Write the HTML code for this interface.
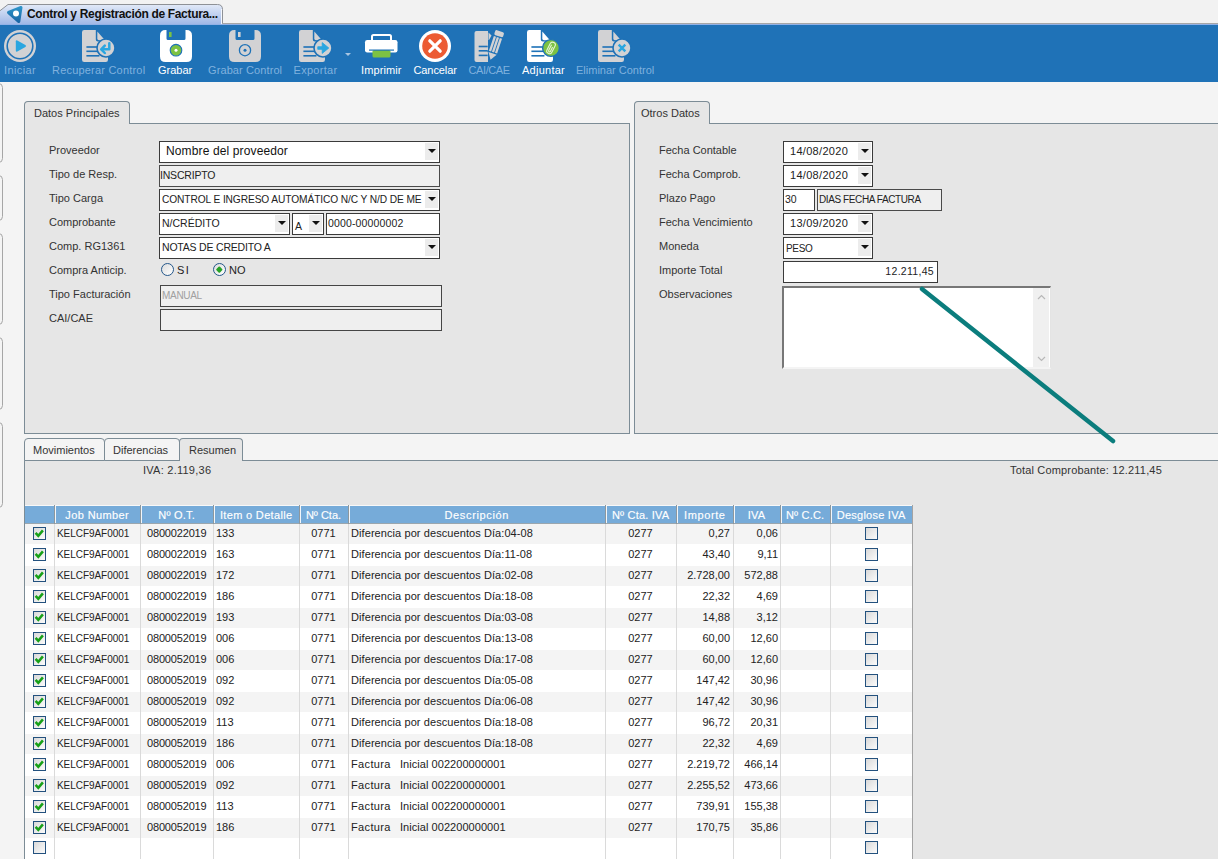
<!DOCTYPE html><html><head><meta charset="utf-8"><style>
*{margin:0;padding:0;box-sizing:border-box}
html,body{width:1218px;height:859px;overflow:hidden;background:#f4f4f4;font-family:"Liberation Sans",sans-serif;font-size:11px;color:#333}
.a{position:absolute}
.tl{position:absolute;top:64px;font-size:11px;line-height:13px;white-space:nowrap;color:#7fb1de}
.tl.en{color:#fff}
svg{position:absolute;overflow:visible}
.lbl{position:absolute;white-space:nowrap;color:#333;font-size:11px;line-height:13px}
.inp{position:absolute;height:22px;border:1px solid #3a3a3a;background:#fff;white-space:nowrap;overflow:hidden}
.inp.dis{background:#efefef;border-color:#4a4a4a}
.inp span{position:absolute;left:3px;top:3px;color:#222;font-size:10.5px;line-height:13px}
.dd{position:absolute;right:1px;top:1px;width:13px;height:17px;background:#ececec}
.dd:after{content:"";position:absolute;left:2.5px;top:6px;border-left:4px solid transparent;border-right:4px solid transparent;border-top:4.5px solid #111}
.vt{position:absolute;left:-6px;width:9px;border:1px solid #a6a6a6;border-radius:5px;background:#f4f4f4}
.hdr{position:absolute;top:506px;height:18px;-webkit-text-stroke:0.15px #fff;background:#76abd9;color:#fff;text-align:center;white-space:nowrap;overflow:hidden;font-size:11px;line-height:13px;border-bottom:1px solid #9aa6ae}
.hdr span{position:absolute;left:0;right:0;top:3px}
.hsep{position:absolute;top:506px;width:2px;height:18px;background:#a9c3dc;border-left:1px solid #8aa}
.cell{position:absolute;white-space:nowrap;color:#222;font-size:11px;line-height:13px}
.rowbg{position:absolute;left:25px;width:887px;height:21px}
.vline{position:absolute;width:1px;background:#dadada;top:524px;height:335px}
.cb{position:absolute;width:13px;height:13px;border:1px solid #23517e;background:linear-gradient(135deg,#d9d9d9,#fbfbfb)}
.rad{position:absolute;width:13px;height:13px;border:1.4px solid #24578a;border-radius:50%;background:linear-gradient(135deg,#dcdcdc,#fff)}
</style></head><body>
<div class="a" style="left:0;top:0;width:1218px;height:25px;background:#f2f2f2"></div>
<svg style="left:0;top:0" width="230" height="26" viewBox="0 0 230 26"><defs><linearGradient id="ttg" x1="0" y1="0" x2="0" y2="1"><stop offset="0" stop-color="#e2eaf8"/><stop offset="1" stop-color="#9ab3e5"/></linearGradient></defs><path d="M-1 26 V11.5 L8 4.5 H217.5 Q222.5 4.5 222.5 9.5 V26 Z" fill="url(#ttg)" stroke="#8e9196" stroke-width="1"/></svg>
<svg style="left:5px;top:6px" width="18" height="18" viewBox="0 0 18 18"><defs><linearGradient id="tg" x1="0" y1="0" x2="0" y2="1"><stop offset="0" stop-color="#2d93c8"/><stop offset="1" stop-color="#1b67a6"/></linearGradient></defs><path d="M3.5 6.5 L16 1.5 L13.8 15.5 Z" fill="url(#tg)" stroke="url(#tg)" stroke-width="3" stroke-linejoin="round"/><circle cx="11" cy="7.5" r="3" fill="#fff"/></svg>
<div class="a" style="left:222px;top:23px;width:1000px;height:1px;background:#a6a6a6"></div>
<div class="a" style="left:0;top:24px;width:1218px;height:1px;background:#92b1e6"></div>
<div class="a" style="left:221px;top:9px;width:1px;height:15px;background:#f4f8ff"></div>
<div class="a" style="left:27px;top:8px;font-weight:bold;font-size:12px;letter-spacing:-0.33px;line-height:13px;color:#111;white-space:nowrap">Control y Registración de Factura...</div>
<div class="a" style="left:0;top:25px;width:1218px;height:57px;background:#1f72b7"></div>
<svg style="left:4px;top:30px" width="32" height="32" viewBox="0 0 32 32"><circle cx="16" cy="16" r="16" fill="#d2d2d4"/><circle cx="16" cy="16" r="12.8" fill="none" stroke="#1f72b7" stroke-width="1.6"/><path d="M11.8 11.3 Q11.8 9.6 13.3 10.4 L21.4 14.9 Q22.9 15.9 21.4 16.9 L13.3 21.5 Q11.8 22.3 11.8 20.6 Z" fill="#2aa6e0"/></svg>
<div class="tl" style="left:4px;letter-spacing:0.4px">Iniciar</div>
<svg style="left:82px;top:30px" width="34" height="34" viewBox="0 0 34 34"><path d="M2.2 0 H13.8 V9.6 Q13.8 11.6 15.8 11.6 H26 V29.8 Q26 32 23.8 32 H2.2 Q0 32 0 29.8 V2.2 Q0 0 2.2 0 Z" fill="#d2d2d4"/><path d="M15.3 1.6 L23 10.2 H17 Q15.3 10.2 15.3 8.6 Z" fill="#d2d2d4"/><rect x="4.4" y="16.2" width="13" height="1.6" fill="#1f72b7"/><rect x="4.4" y="20.5" width="13" height="1.6" fill="#1f72b7"/><rect x="4.4" y="25" width="13" height="1.6" fill="#1f72b7"/><circle cx="24" cy="18" r="9" fill="#d2d2d4" stroke="#1f72b7" stroke-width="1.6"/><path d="M27.3 13.2 V19.3 H21.5" fill="none" stroke="#2aa6e0" stroke-width="2.5" stroke-linecap="round" stroke-linejoin="round"/><path d="M22.8 15.6 L19.2 19.3 L22.8 23" fill="none" stroke="#2aa6e0" stroke-width="2.5" stroke-linecap="round" stroke-linejoin="round"/></svg>
<div class="tl" style="left:52px;letter-spacing:0.2px">Recuperar Control</div>
<svg style="left:160px;top:30px" width="32" height="32" viewBox="0 0 32 32"><path d="M5.5 0 H6.5 V8.5 Q6.5 10 8 10 H24 Q25.5 10 25.5 8.5 V0 H26.5 Q32 0 32 5.5 V26.5 Q32 32 26.5 32 H5.5 Q0 32 0 26.5 V5.5 Q0 0 5.5 0 Z" fill="#ffffff"/><rect x="9" y="2" width="2.6" height="5" fill="#7cc243"/><circle cx="16" cy="20.2" r="5.8" fill="#7cc243" stroke="#1f72b7" stroke-width="1.1"/><circle cx="16" cy="20.2" r="1.5" fill="#fff"/></svg>
<div class="tl en" style="left:158px">Grabar</div>
<svg style="left:229px;top:30px" width="32" height="32" viewBox="0 0 32 32"><path d="M5.5 0 H6.5 V8.5 Q6.5 10 8 10 H24 Q25.5 10 25.5 8.5 V0 H26.5 Q32 0 32 5.5 V26.5 Q32 32 26.5 32 H5.5 Q0 32 0 26.5 V5.5 Q0 0 5.5 0 Z" fill="#d2d2d4"/><rect x="9" y="2" width="2.6" height="5" fill="#d2d2d4"/><circle cx="16" cy="20.2" r="5.6" fill="#d2d2d4" stroke="#1f72b7" stroke-width="1.3"/><circle cx="16" cy="20.2" r="1.5" fill="#1f72b7"/></svg>
<div class="tl" style="left:208px;letter-spacing:0.1px">Grabar Control</div>
<svg style="left:299px;top:30px" width="34" height="34" viewBox="0 0 34 34"><path d="M2.2 0 H13.8 V9.6 Q13.8 11.6 15.8 11.6 H26 V29.8 Q26 32 23.8 32 H2.2 Q0 32 0 29.8 V2.2 Q0 0 2.2 0 Z" fill="#d2d2d4"/><path d="M15.3 1.6 L23 10.2 H17 Q15.3 10.2 15.3 8.6 Z" fill="#d2d2d4"/><rect x="4.4" y="16.2" width="13" height="1.6" fill="#1f72b7"/><rect x="4.4" y="20.5" width="13" height="1.6" fill="#1f72b7"/><rect x="4.4" y="25" width="13" height="1.6" fill="#1f72b7"/><circle cx="24" cy="18" r="9" fill="#d2d2d4" stroke="#1f72b7" stroke-width="1.6"/><rect x="18.3" y="16.2" width="6" height="3.6" rx="0.8" fill="#2aa6e0"/><path d="M23.2 12.6 L29.8 18 L23.2 23.4 Z" fill="#2aa6e0" stroke="#2aa6e0" stroke-width="0.8" stroke-linejoin="round"/></svg>
<svg style="left:345px;top:52.5px" width="6" height="3" viewBox="0 0 6 3"><path d="M0 0 H6 L3 3 Z" fill="#a9c6e2"/></svg>
<div class="tl" style="left:293.5px;letter-spacing:0.3px">Exportar</div>
<svg style="left:365px;top:34px" width="33" height="24" viewBox="0 0 33 24"><path d="M7 6 V2.5 Q7 1 8.5 1 H24.5 Q26 1 26 2.5 V6" fill="none" stroke="#fff" stroke-width="2"/><rect x="0" y="6" width="32.5" height="12.5" rx="2.2" fill="#fff"/><rect x="7.5" y="16" width="18" height="7.5" rx="1.5" fill="#7cc243"/><rect x="4" y="15.5" width="25" height="1.2" fill="#1f72b7"/></svg>
<div class="tl en" style="left:361px;letter-spacing:0.1px">Imprimir</div>
<svg style="left:419px;top:30px" width="32" height="32" viewBox="0 0 32 32"><circle cx="16" cy="16" r="16" fill="#fff"/><circle cx="16" cy="16" r="12.8" fill="#ec5b33"/><path d="M10.8 10.8 L21.2 21.2 M21.2 10.8 L10.8 21.2" stroke="#fff" stroke-width="3.2" stroke-linecap="round"/></svg>
<div class="tl en" style="left:413.5px;letter-spacing:-0.1px">Cancelar</div>
<svg style="left:474px;top:30px" width="32" height="34" viewBox="0 0 32 34"><path d="M2.5 1 H14 V32 H2.5 Q0.5 32 0.5 30 V3 Q0.5 1 2.5 1 Z" fill="#d2d2d4"/><path d="M14.5 2.5 L17.5 5.5 L15 10 L14.5 10 Z" fill="#d2d2d4"/><rect x="4.7" y="15.7" width="9" height="1.6" fill="#1f72b7"/><rect x="4.7" y="20" width="9" height="1.6" fill="#1f72b7"/><rect x="4.7" y="24.6" width="9" height="1.6" fill="#1f72b7"/><g transform="translate(16.2 30.6) rotate(18.4)"><path d="M0 0 L-5.5 -8 V-25.5 H5.5 V-8 Z" fill="#1f72b7"/><path d="M0 -1 L-4.3 -7.6 H4.3 Z" fill="#d2d2d4"/><rect x="-4.3" y="-24.5" width="2.3" height="15.5" fill="#d2d2d4"/><rect x="-1.15" y="-24.5" width="2.3" height="15.5" fill="#d2d2d4"/><rect x="2" y="-24.5" width="2.3" height="15.5" fill="#d2d2d4"/><rect x="-4.6" y="-31" width="9.2" height="5.2" rx="1.5" fill="#d2d2d4"/></g></svg>
<div class="tl" style="left:468.5px;letter-spacing:-0.4px">CAI/CAE</div>
<svg style="left:527px;top:30px" width="34" height="34" viewBox="0 0 34 34"><path d="M2.2 0 H13.8 V9.6 Q13.8 11.6 15.8 11.6 H26 V29.8 Q26 32 23.8 32 H2.2 Q0 32 0 29.8 V2.2 Q0 0 2.2 0 Z" fill="#ffffff"/><path d="M15.3 1.6 L23 10.2 H17 Q15.3 10.2 15.3 8.6 Z" fill="#ffffff"/><rect x="4.4" y="16.2" width="13" height="1.6" fill="#1f72b7"/><rect x="4.4" y="20.5" width="13" height="1.6" fill="#1f72b7"/><rect x="4.4" y="25" width="13" height="1.6" fill="#1f72b7"/><circle cx="24" cy="18" r="8.4" fill="#7cc243" stroke="#1f72b7" stroke-width="1.4"/><g transform="translate(24 18) rotate(27)" fill="none" stroke="#e6f4d6" stroke-width="1.1"><path d="M-2.7 3.6 V-3.6 Q-2.7 -6.2 0 -6.2 Q2.7 -6.2 2.7 -3.6 V3.4 Q2.7 6 0 6 Q-2.7 6 -2.7 3.6"/><path d="M-1 -3.2 V3 Q-1 4.2 0 4.2 Q1 4.2 1 3 V-1.5"/></g></svg>
<div class="tl en" style="left:522px;letter-spacing:0.25px">Adjuntar</div>
<svg style="left:598px;top:30px" width="34" height="34" viewBox="0 0 34 34"><path d="M2.2 0 H13.8 V9.6 Q13.8 11.6 15.8 11.6 H26 V29.8 Q26 32 23.8 32 H2.2 Q0 32 0 29.8 V2.2 Q0 0 2.2 0 Z" fill="#d2d2d4"/><path d="M15.3 1.6 L23 10.2 H17 Q15.3 10.2 15.3 8.6 Z" fill="#d2d2d4"/><rect x="4.4" y="16.2" width="13" height="1.6" fill="#1f72b7"/><rect x="4.4" y="20.5" width="13" height="1.6" fill="#1f72b7"/><rect x="4.4" y="25" width="13" height="1.6" fill="#1f72b7"/><circle cx="24" cy="18" r="9" fill="#d2d2d4" stroke="#1f72b7" stroke-width="1.6"/><path d="M20.7 14.7 L27.3 21.3 M27.3 14.7 L20.7 21.3" stroke="#2aa6e0" stroke-width="2.4"/></svg>
<div class="tl" style="left:576px">Eliminar Control</div>
<div class="vt" style="top:83px;height:80px"></div>
<div class="vt" style="top:175px;height:46px"></div>
<div class="vt" style="top:233px;height:92px"></div>
<div class="vt" style="top:337px;height:73px"></div>
<div class="vt" style="top:422px;height:86px"></div>
<div class="a" style="left:24px;top:123px;width:606px;height:311px;background:#e6e6e6;border:1px solid #7c8c96"></div>
<div class="a" style="left:24px;top:101px;width:106px;height:23px;background:#e6e6e6;border:1px solid #7c8c96;border-bottom:none;border-radius:4px 4px 0 0"></div>
<div class="lbl" style="left:34px;top:107px">Datos Principales</div>
<div class="a" style="left:634px;top:123px;width:590px;height:311px;background:#e6e6e6;border:1px solid #7c8c96"></div>
<div class="a" style="left:634px;top:101px;width:76px;height:23px;background:#e6e6e6;border:1px solid #7c8c96;border-bottom:none;border-radius:4px 4px 0 0"></div>
<div class="lbl" style="left:641px;top:107px">Otros Datos</div>
<div class="lbl" style="left:49px;top:144px">Proveedor</div>
<div class="lbl" style="left:49px;top:168px">Tipo de Resp.</div>
<div class="lbl" style="left:49px;top:192px">Tipo Carga</div>
<div class="lbl" style="left:49px;top:216px">Comprobante</div>
<div class="lbl" style="left:49px;top:240px">Comp. RG1361</div>
<div class="lbl" style="left:49px;top:264px">Compra Anticip.</div>
<div class="lbl" style="left:49px;top:288px">Tipo Facturación</div>
<div class="lbl" style="left:49px;top:312px">CAI/CAE</div>
<div class="inp" style="left:159px;top:141px;width:281px;"><span style="left:6px;font-size:12px;letter-spacing:0.13px;color:#111">Nombre del proveedor</span><div class="dd"></div></div>
<div class="inp dis" style="left:159px;top:165px;width:281px;"><span style="left:0px;font-size:10.5px;letter-spacing:-0.2px">INSCRIPTO</span></div>
<div class="inp" style="left:159px;top:189px;width:281px;"><span style="left:2px;font-size:10.2px;letter-spacing:-0.1px">CONTROL E INGRESO AUTOMÁTICO N/C Y N/D DE ME</span><div class="dd"></div></div>
<div class="inp" style="left:159px;top:213px;width:131px;"><span style="left:2px;font-size:10.5px;letter-spacing:0px">N/CRÉDITO</span><div class="dd"></div></div>
<div class="inp" style="left:292px;top:213px;width:32px;"><span style="left:2px;top:6px;font-size:10.5px">A</span><div class="dd"></div></div>
<div class="inp" style="left:326px;top:213px;width:114px;"><span style="left:1px;font-size:10.5px;letter-spacing:0.15px">0000-00000002</span></div>
<div class="inp" style="left:159px;top:237px;width:281px;"><span style="left:2px;font-size:10.5px;letter-spacing:-0.2px">NOTAS DE CREDITO A</span><div class="dd"></div></div>
<div class="rad" style="left:161px;top:263px"></div>
<div class="lbl" style="left:177px;top:264px;letter-spacing:1.5px;color:#222">SI</div>
<div class="rad" style="left:213px;top:263px"><div style="position:absolute;left:3.2px;top:3.2px;width:4.6px;height:4.6px;transform:rotate(45deg);border-radius:1px;background:#27a327"></div></div>
<div class="lbl" style="left:229px;top:264px;color:#222">NO</div>
<div class="inp dis" style="left:160px;top:285px;width:282px;border-color:#454545"><span style="left:1px;color:#a0a0a0;font-size:10px;letter-spacing:-0.3px">MANUAL</span></div>
<div class="inp dis" style="left:160px;top:309px;width:282px;border-color:#454545"><span style=""></span></div>
<div class="lbl" style="left:659px;top:144px">Fecha Contable</div>
<div class="lbl" style="left:659px;top:168px">Fecha Comprob.</div>
<div class="lbl" style="left:659px;top:192px">Plazo Pago</div>
<div class="lbl" style="left:659px;top:216px">Fecha Vencimiento</div>
<div class="lbl" style="left:659px;top:240px">Moneda</div>
<div class="lbl" style="left:659px;top:264px">Importe Total</div>
<div class="lbl" style="left:659px;top:288px">Observaciones</div>
<div class="inp" style="left:783px;top:141px;width:90px;"><span style="left:6px;font-size:11px;letter-spacing:0.3px">14/08/2020</span><div class="dd"></div></div>
<div class="inp" style="left:783px;top:165px;width:90px;"><span style="left:6px;font-size:11px;letter-spacing:0.3px">14/08/2020</span><div class="dd"></div></div>
<div class="inp" style="left:783px;top:189px;width:32px;"><span style="left:1px;font-size:10.5px">30</span></div>
<div class="inp dis" style="left:817px;top:189px;width:125px;"><span style="left:1px;font-size:10px;letter-spacing:-0.4px">DIAS FECHA FACTURA</span></div>
<div class="inp" style="left:783px;top:213px;width:90px;"><span style="left:6px;font-size:11px;letter-spacing:0.3px">13/09/2020</span><div class="dd"></div></div>
<div class="inp" style="left:783px;top:237px;width:90px;"><span style="left:2px;top:4px;font-size:10px;letter-spacing:-0.3px">PESO</span><div class="dd"></div></div>
<div class="inp" style="left:783px;top:261px;width:155px;"><span style="left:auto;right:3px;font-size:11px;letter-spacing:0.3px"><span style="position:static">12.211,45</span></span></div>
<div class="a" style="left:782px;top:286px;width:269px;height:83px;background:#fff;border-top:2px solid #777;border-left:2px solid #777;border-right:1px solid #e4e4e4;border-bottom:2px solid #f4f4f4"></div>
<div class="a" style="left:1033px;top:288px;width:16px;height:79px;background:#f0f0f0"></div>
<svg style="left:1037px;top:294px" width="9" height="6" viewBox="0 0 9 6"><path d="M1 5 L4.5 1.5 L8 5" fill="none" stroke="#b8b8b8" stroke-width="1.2"/></svg>
<svg style="left:1037px;top:356px" width="9" height="6" viewBox="0 0 9 6"><path d="M1 1 L4.5 4.5 L8 1" fill="none" stroke="#b8b8b8" stroke-width="1.2"/></svg>
<div class="a" style="left:24px;top:460px;width:1200px;height:405px;background:#e6e6e6;border:1px solid #7c8c96"></div>
<div class="a" style="left:24px;top:438px;width:81px;height:23px;background:#f4f4f4;border:1px solid #7c8c96;border-radius:4px 4px 0 0"></div>
<div class="lbl" style="left:33px;top:444px">Movimientos</div>
<div class="a" style="left:104px;top:438px;width:76px;height:23px;background:#f4f4f4;border:1px solid #7c8c96;border-radius:4px 4px 0 0"></div>
<div class="lbl" style="left:113px;top:444px">Diferencias</div>
<div class="a" style="left:179px;top:438px;width:64px;height:23px;background:#e6e6e6;border:1px solid #7c8c96;border-bottom:none;border-radius:4px 4px 0 0"></div>
<div class="lbl" style="left:189px;top:444px">Resumen</div>
<div class="lbl" style="left:143px;top:464px;letter-spacing:0.25px">IVA: 2.119,36</div>
<div class="lbl" style="left:1010px;top:464px;letter-spacing:0.17px">Total Comprobante: 12.211,45</div>
<div class="rowbg" style="top:524px;height:20px;background:#f4f4f4"></div>
<div class="rowbg" style="top:544px;height:22px;background:#ffffff"></div>
<div class="rowbg" style="top:566px;height:20px;background:#f4f4f4"></div>
<div class="rowbg" style="top:586px;height:22px;background:#ffffff"></div>
<div class="rowbg" style="top:608px;height:20px;background:#f4f4f4"></div>
<div class="rowbg" style="top:628px;height:22px;background:#ffffff"></div>
<div class="rowbg" style="top:650px;height:20px;background:#f4f4f4"></div>
<div class="rowbg" style="top:670px;height:22px;background:#ffffff"></div>
<div class="rowbg" style="top:692px;height:20px;background:#f4f4f4"></div>
<div class="rowbg" style="top:712px;height:22px;background:#ffffff"></div>
<div class="rowbg" style="top:734px;height:20px;background:#f4f4f4"></div>
<div class="rowbg" style="top:754px;height:22px;background:#ffffff"></div>
<div class="rowbg" style="top:776px;height:20px;background:#f4f4f4"></div>
<div class="rowbg" style="top:796px;height:22px;background:#ffffff"></div>
<div class="rowbg" style="top:818px;height:20px;background:#f4f4f4"></div>
<div class="rowbg" style="top:838px;height:22px;background:#ffffff"></div>
<div class="a" style="left:25px;top:505px;width:887px;height:1px;background:#f8f8f8"></div>
<div class="hdr" style="left:25px;width:29px"><span style="letter-spacing:0px;text-indent:0px"></span></div>
<div class="hdr" style="left:54px;width:86px"><span style="letter-spacing:0.4px;text-indent:0.4px">Job Number</span></div>
<div class="hdr" style="left:140px;width:73px"><span style="letter-spacing:0.2px;text-indent:0.2px">Nº O.T.</span></div>
<div class="hdr" style="left:213px;width:86px"><span style="letter-spacing:0.33px;text-indent:0.33px">Item o Detalle</span></div>
<div class="hdr" style="left:299px;width:49px"><span style="letter-spacing:0px;text-indent:0px">Nº Cta.</span></div>
<div class="hdr" style="left:348px;width:257px"><span style="letter-spacing:0.65px;text-indent:0.65px">Descripción</span></div>
<div class="hdr" style="left:605px;width:71px"><span style="letter-spacing:0.2px;text-indent:0.2px">Nº Cta. IVA</span></div>
<div class="hdr" style="left:676px;width:57px"><span style="letter-spacing:0.6px;text-indent:0.6px">Importe</span></div>
<div class="hdr" style="left:733px;width:47px"><span style="letter-spacing:0.2px;text-indent:0.2px">IVA</span></div>
<div class="hdr" style="left:780px;width:50px"><span style="letter-spacing:0.2px;text-indent:0.2px">Nº C.C.</span></div>
<div class="hdr" style="left:830px;width:82px"><span style="letter-spacing:0.25px;text-indent:0.25px">Desglose IVA</span></div>
<div class="vline" style="left:54px"></div>
<div class="a" style="left:54px;top:505px;width:1px;height:19px;background:#8d979d"></div>
<div class="a" style="left:55px;top:506px;width:1px;height:17px;background:#f2f6fa"></div>
<div class="vline" style="left:140px"></div>
<div class="a" style="left:140px;top:505px;width:1px;height:19px;background:#8d979d"></div>
<div class="a" style="left:141px;top:506px;width:1px;height:17px;background:#f2f6fa"></div>
<div class="vline" style="left:213px"></div>
<div class="a" style="left:213px;top:505px;width:1px;height:19px;background:#8d979d"></div>
<div class="a" style="left:214px;top:506px;width:1px;height:17px;background:#f2f6fa"></div>
<div class="vline" style="left:299px"></div>
<div class="a" style="left:299px;top:505px;width:1px;height:19px;background:#8d979d"></div>
<div class="a" style="left:300px;top:506px;width:1px;height:17px;background:#f2f6fa"></div>
<div class="vline" style="left:348px"></div>
<div class="a" style="left:348px;top:505px;width:1px;height:19px;background:#8d979d"></div>
<div class="a" style="left:349px;top:506px;width:1px;height:17px;background:#f2f6fa"></div>
<div class="vline" style="left:605px"></div>
<div class="a" style="left:605px;top:505px;width:1px;height:19px;background:#8d979d"></div>
<div class="a" style="left:606px;top:506px;width:1px;height:17px;background:#f2f6fa"></div>
<div class="vline" style="left:676px"></div>
<div class="a" style="left:676px;top:505px;width:1px;height:19px;background:#8d979d"></div>
<div class="a" style="left:677px;top:506px;width:1px;height:17px;background:#f2f6fa"></div>
<div class="vline" style="left:733px"></div>
<div class="a" style="left:733px;top:505px;width:1px;height:19px;background:#8d979d"></div>
<div class="a" style="left:734px;top:506px;width:1px;height:17px;background:#f2f6fa"></div>
<div class="vline" style="left:780px"></div>
<div class="a" style="left:780px;top:505px;width:1px;height:19px;background:#8d979d"></div>
<div class="a" style="left:781px;top:506px;width:1px;height:17px;background:#f2f6fa"></div>
<div class="vline" style="left:830px"></div>
<div class="a" style="left:830px;top:505px;width:1px;height:19px;background:#8d979d"></div>
<div class="a" style="left:831px;top:506px;width:1px;height:17px;background:#f2f6fa"></div>
<div class="vline" style="left:912px;top:505px;height:354px;background:#a3a3a3"></div>
<div class="cb" style="left:33px;top:527px"><svg style="left:0;top:0" width="11" height="11" viewBox="0 0 11 11"><path d="M1.6 4.9 L4.3 7.9 L8.9 2.4" fill="none" stroke="#17a017" stroke-width="2.5"/></svg></div>
<div class="cell" style="left:57px;top:527px;font-size:10px;letter-spacing:-0.05px">KELCF9AF0001</div>
<div class="cell" style="left:147px;top:527px;font-size:11px;letter-spacing:-0.17px">0800022019</div>
<div class="cell" style="left:216px;top:527px">133</div>
<div class="cell" style="left:299px;width:49px;text-align:center;top:527px">0771</div>
<div class="cell" style="left:351px;top:527px;letter-spacing:0.08px">Diferencia por descuentos Día:04-08</div>
<div class="cell" style="left:605px;width:71px;text-align:center;top:527px">0277</div>
<div class="cell" style="left:676px;width:54px;text-align:right;top:527px">0,27</div>
<div class="cell" style="left:733px;width:45px;text-align:right;top:527px">0,06</div>
<div class="cb" style="left:865px;top:527px"></div>
<div class="cb" style="left:33px;top:548px"><svg style="left:0;top:0" width="11" height="11" viewBox="0 0 11 11"><path d="M1.6 4.9 L4.3 7.9 L8.9 2.4" fill="none" stroke="#17a017" stroke-width="2.5"/></svg></div>
<div class="cell" style="left:57px;top:548px;font-size:10px;letter-spacing:-0.05px">KELCF9AF0001</div>
<div class="cell" style="left:147px;top:548px;font-size:11px;letter-spacing:-0.17px">0800022019</div>
<div class="cell" style="left:216px;top:548px">163</div>
<div class="cell" style="left:299px;width:49px;text-align:center;top:548px">0771</div>
<div class="cell" style="left:351px;top:548px;letter-spacing:0.08px">Diferencia por descuentos Día:11-08</div>
<div class="cell" style="left:605px;width:71px;text-align:center;top:548px">0277</div>
<div class="cell" style="left:676px;width:54px;text-align:right;top:548px">43,40</div>
<div class="cell" style="left:733px;width:45px;text-align:right;top:548px">9,11</div>
<div class="cb" style="left:865px;top:548px"></div>
<div class="cb" style="left:33px;top:569px"><svg style="left:0;top:0" width="11" height="11" viewBox="0 0 11 11"><path d="M1.6 4.9 L4.3 7.9 L8.9 2.4" fill="none" stroke="#17a017" stroke-width="2.5"/></svg></div>
<div class="cell" style="left:57px;top:569px;font-size:10px;letter-spacing:-0.05px">KELCF9AF0001</div>
<div class="cell" style="left:147px;top:569px;font-size:11px;letter-spacing:-0.17px">0800022019</div>
<div class="cell" style="left:216px;top:569px">172</div>
<div class="cell" style="left:299px;width:49px;text-align:center;top:569px">0771</div>
<div class="cell" style="left:351px;top:569px;letter-spacing:0.08px">Diferencia por descuentos Día:02-08</div>
<div class="cell" style="left:605px;width:71px;text-align:center;top:569px">0277</div>
<div class="cell" style="left:676px;width:54px;text-align:right;top:569px">2.728,00</div>
<div class="cell" style="left:733px;width:45px;text-align:right;top:569px">572,88</div>
<div class="cb" style="left:865px;top:569px"></div>
<div class="cb" style="left:33px;top:590px"><svg style="left:0;top:0" width="11" height="11" viewBox="0 0 11 11"><path d="M1.6 4.9 L4.3 7.9 L8.9 2.4" fill="none" stroke="#17a017" stroke-width="2.5"/></svg></div>
<div class="cell" style="left:57px;top:590px;font-size:10px;letter-spacing:-0.05px">KELCF9AF0001</div>
<div class="cell" style="left:147px;top:590px;font-size:11px;letter-spacing:-0.17px">0800022019</div>
<div class="cell" style="left:216px;top:590px">186</div>
<div class="cell" style="left:299px;width:49px;text-align:center;top:590px">0771</div>
<div class="cell" style="left:351px;top:590px;letter-spacing:0.08px">Diferencia por descuentos Día:18-08</div>
<div class="cell" style="left:605px;width:71px;text-align:center;top:590px">0277</div>
<div class="cell" style="left:676px;width:54px;text-align:right;top:590px">22,32</div>
<div class="cell" style="left:733px;width:45px;text-align:right;top:590px">4,69</div>
<div class="cb" style="left:865px;top:590px"></div>
<div class="cb" style="left:33px;top:611px"><svg style="left:0;top:0" width="11" height="11" viewBox="0 0 11 11"><path d="M1.6 4.9 L4.3 7.9 L8.9 2.4" fill="none" stroke="#17a017" stroke-width="2.5"/></svg></div>
<div class="cell" style="left:57px;top:611px;font-size:10px;letter-spacing:-0.05px">KELCF9AF0001</div>
<div class="cell" style="left:147px;top:611px;font-size:11px;letter-spacing:-0.17px">0800022019</div>
<div class="cell" style="left:216px;top:611px">193</div>
<div class="cell" style="left:299px;width:49px;text-align:center;top:611px">0771</div>
<div class="cell" style="left:351px;top:611px;letter-spacing:0.08px">Diferencia por descuentos Día:03-08</div>
<div class="cell" style="left:605px;width:71px;text-align:center;top:611px">0277</div>
<div class="cell" style="left:676px;width:54px;text-align:right;top:611px">14,88</div>
<div class="cell" style="left:733px;width:45px;text-align:right;top:611px">3,12</div>
<div class="cb" style="left:865px;top:611px"></div>
<div class="cb" style="left:33px;top:632px"><svg style="left:0;top:0" width="11" height="11" viewBox="0 0 11 11"><path d="M1.6 4.9 L4.3 7.9 L8.9 2.4" fill="none" stroke="#17a017" stroke-width="2.5"/></svg></div>
<div class="cell" style="left:57px;top:632px;font-size:10px;letter-spacing:-0.05px">KELCF9AF0001</div>
<div class="cell" style="left:147px;top:632px;font-size:11px;letter-spacing:-0.17px">0800052019</div>
<div class="cell" style="left:216px;top:632px">006</div>
<div class="cell" style="left:299px;width:49px;text-align:center;top:632px">0771</div>
<div class="cell" style="left:351px;top:632px;letter-spacing:0.08px">Diferencia por descuentos Día:13-08</div>
<div class="cell" style="left:605px;width:71px;text-align:center;top:632px">0277</div>
<div class="cell" style="left:676px;width:54px;text-align:right;top:632px">60,00</div>
<div class="cell" style="left:733px;width:45px;text-align:right;top:632px">12,60</div>
<div class="cb" style="left:865px;top:632px"></div>
<div class="cb" style="left:33px;top:653px"><svg style="left:0;top:0" width="11" height="11" viewBox="0 0 11 11"><path d="M1.6 4.9 L4.3 7.9 L8.9 2.4" fill="none" stroke="#17a017" stroke-width="2.5"/></svg></div>
<div class="cell" style="left:57px;top:653px;font-size:10px;letter-spacing:-0.05px">KELCF9AF0001</div>
<div class="cell" style="left:147px;top:653px;font-size:11px;letter-spacing:-0.17px">0800052019</div>
<div class="cell" style="left:216px;top:653px">006</div>
<div class="cell" style="left:299px;width:49px;text-align:center;top:653px">0771</div>
<div class="cell" style="left:351px;top:653px;letter-spacing:0.08px">Diferencia por descuentos Día:17-08</div>
<div class="cell" style="left:605px;width:71px;text-align:center;top:653px">0277</div>
<div class="cell" style="left:676px;width:54px;text-align:right;top:653px">60,00</div>
<div class="cell" style="left:733px;width:45px;text-align:right;top:653px">12,60</div>
<div class="cb" style="left:865px;top:653px"></div>
<div class="cb" style="left:33px;top:674px"><svg style="left:0;top:0" width="11" height="11" viewBox="0 0 11 11"><path d="M1.6 4.9 L4.3 7.9 L8.9 2.4" fill="none" stroke="#17a017" stroke-width="2.5"/></svg></div>
<div class="cell" style="left:57px;top:674px;font-size:10px;letter-spacing:-0.05px">KELCF9AF0001</div>
<div class="cell" style="left:147px;top:674px;font-size:11px;letter-spacing:-0.17px">0800052019</div>
<div class="cell" style="left:216px;top:674px">092</div>
<div class="cell" style="left:299px;width:49px;text-align:center;top:674px">0771</div>
<div class="cell" style="left:351px;top:674px;letter-spacing:0.08px">Diferencia por descuentos Día:05-08</div>
<div class="cell" style="left:605px;width:71px;text-align:center;top:674px">0277</div>
<div class="cell" style="left:676px;width:54px;text-align:right;top:674px">147,42</div>
<div class="cell" style="left:733px;width:45px;text-align:right;top:674px">30,96</div>
<div class="cb" style="left:865px;top:674px"></div>
<div class="cb" style="left:33px;top:695px"><svg style="left:0;top:0" width="11" height="11" viewBox="0 0 11 11"><path d="M1.6 4.9 L4.3 7.9 L8.9 2.4" fill="none" stroke="#17a017" stroke-width="2.5"/></svg></div>
<div class="cell" style="left:57px;top:695px;font-size:10px;letter-spacing:-0.05px">KELCF9AF0001</div>
<div class="cell" style="left:147px;top:695px;font-size:11px;letter-spacing:-0.17px">0800052019</div>
<div class="cell" style="left:216px;top:695px">092</div>
<div class="cell" style="left:299px;width:49px;text-align:center;top:695px">0771</div>
<div class="cell" style="left:351px;top:695px;letter-spacing:0.08px">Diferencia por descuentos Día:06-08</div>
<div class="cell" style="left:605px;width:71px;text-align:center;top:695px">0277</div>
<div class="cell" style="left:676px;width:54px;text-align:right;top:695px">147,42</div>
<div class="cell" style="left:733px;width:45px;text-align:right;top:695px">30,96</div>
<div class="cb" style="left:865px;top:695px"></div>
<div class="cb" style="left:33px;top:716px"><svg style="left:0;top:0" width="11" height="11" viewBox="0 0 11 11"><path d="M1.6 4.9 L4.3 7.9 L8.9 2.4" fill="none" stroke="#17a017" stroke-width="2.5"/></svg></div>
<div class="cell" style="left:57px;top:716px;font-size:10px;letter-spacing:-0.05px">KELCF9AF0001</div>
<div class="cell" style="left:147px;top:716px;font-size:11px;letter-spacing:-0.17px">0800052019</div>
<div class="cell" style="left:216px;top:716px">113</div>
<div class="cell" style="left:299px;width:49px;text-align:center;top:716px">0771</div>
<div class="cell" style="left:351px;top:716px;letter-spacing:0.08px">Diferencia por descuentos Día:18-08</div>
<div class="cell" style="left:605px;width:71px;text-align:center;top:716px">0277</div>
<div class="cell" style="left:676px;width:54px;text-align:right;top:716px">96,72</div>
<div class="cell" style="left:733px;width:45px;text-align:right;top:716px">20,31</div>
<div class="cb" style="left:865px;top:716px"></div>
<div class="cb" style="left:33px;top:737px"><svg style="left:0;top:0" width="11" height="11" viewBox="0 0 11 11"><path d="M1.6 4.9 L4.3 7.9 L8.9 2.4" fill="none" stroke="#17a017" stroke-width="2.5"/></svg></div>
<div class="cell" style="left:57px;top:737px;font-size:10px;letter-spacing:-0.05px">KELCF9AF0001</div>
<div class="cell" style="left:147px;top:737px;font-size:11px;letter-spacing:-0.17px">0800052019</div>
<div class="cell" style="left:216px;top:737px">186</div>
<div class="cell" style="left:299px;width:49px;text-align:center;top:737px">0771</div>
<div class="cell" style="left:351px;top:737px;letter-spacing:0.08px">Diferencia por descuentos Día:18-08</div>
<div class="cell" style="left:605px;width:71px;text-align:center;top:737px">0277</div>
<div class="cell" style="left:676px;width:54px;text-align:right;top:737px">22,32</div>
<div class="cell" style="left:733px;width:45px;text-align:right;top:737px">4,69</div>
<div class="cb" style="left:865px;top:737px"></div>
<div class="cb" style="left:33px;top:758px"><svg style="left:0;top:0" width="11" height="11" viewBox="0 0 11 11"><path d="M1.6 4.9 L4.3 7.9 L8.9 2.4" fill="none" stroke="#17a017" stroke-width="2.5"/></svg></div>
<div class="cell" style="left:57px;top:758px;font-size:10px;letter-spacing:-0.05px">KELCF9AF0001</div>
<div class="cell" style="left:147px;top:758px;font-size:11px;letter-spacing:-0.17px">0800052019</div>
<div class="cell" style="left:216px;top:758px">006</div>
<div class="cell" style="left:299px;width:49px;text-align:center;top:758px">0771</div>
<div class="cell" style="left:351px;top:758px;letter-spacing:0.35px">Factura</div>
<div class="cell" style="left:400px;top:758px;letter-spacing:0.05px">Inicial 002200000001</div>
<div class="cell" style="left:605px;width:71px;text-align:center;top:758px">0277</div>
<div class="cell" style="left:676px;width:54px;text-align:right;top:758px">2.219,72</div>
<div class="cell" style="left:733px;width:45px;text-align:right;top:758px">466,14</div>
<div class="cb" style="left:865px;top:758px"></div>
<div class="cb" style="left:33px;top:779px"><svg style="left:0;top:0" width="11" height="11" viewBox="0 0 11 11"><path d="M1.6 4.9 L4.3 7.9 L8.9 2.4" fill="none" stroke="#17a017" stroke-width="2.5"/></svg></div>
<div class="cell" style="left:57px;top:779px;font-size:10px;letter-spacing:-0.05px">KELCF9AF0001</div>
<div class="cell" style="left:147px;top:779px;font-size:11px;letter-spacing:-0.17px">0800052019</div>
<div class="cell" style="left:216px;top:779px">092</div>
<div class="cell" style="left:299px;width:49px;text-align:center;top:779px">0771</div>
<div class="cell" style="left:351px;top:779px;letter-spacing:0.35px">Factura</div>
<div class="cell" style="left:400px;top:779px;letter-spacing:0.05px">Inicial 002200000001</div>
<div class="cell" style="left:605px;width:71px;text-align:center;top:779px">0277</div>
<div class="cell" style="left:676px;width:54px;text-align:right;top:779px">2.255,52</div>
<div class="cell" style="left:733px;width:45px;text-align:right;top:779px">473,66</div>
<div class="cb" style="left:865px;top:779px"></div>
<div class="cb" style="left:33px;top:800px"><svg style="left:0;top:0" width="11" height="11" viewBox="0 0 11 11"><path d="M1.6 4.9 L4.3 7.9 L8.9 2.4" fill="none" stroke="#17a017" stroke-width="2.5"/></svg></div>
<div class="cell" style="left:57px;top:800px;font-size:10px;letter-spacing:-0.05px">KELCF9AF0001</div>
<div class="cell" style="left:147px;top:800px;font-size:11px;letter-spacing:-0.17px">0800052019</div>
<div class="cell" style="left:216px;top:800px">113</div>
<div class="cell" style="left:299px;width:49px;text-align:center;top:800px">0771</div>
<div class="cell" style="left:351px;top:800px;letter-spacing:0.35px">Factura</div>
<div class="cell" style="left:400px;top:800px;letter-spacing:0.05px">Inicial 002200000001</div>
<div class="cell" style="left:605px;width:71px;text-align:center;top:800px">0277</div>
<div class="cell" style="left:676px;width:54px;text-align:right;top:800px">739,91</div>
<div class="cell" style="left:733px;width:45px;text-align:right;top:800px">155,38</div>
<div class="cb" style="left:865px;top:800px"></div>
<div class="cb" style="left:33px;top:821px"><svg style="left:0;top:0" width="11" height="11" viewBox="0 0 11 11"><path d="M1.6 4.9 L4.3 7.9 L8.9 2.4" fill="none" stroke="#17a017" stroke-width="2.5"/></svg></div>
<div class="cell" style="left:57px;top:821px;font-size:10px;letter-spacing:-0.05px">KELCF9AF0001</div>
<div class="cell" style="left:147px;top:821px;font-size:11px;letter-spacing:-0.17px">0800052019</div>
<div class="cell" style="left:216px;top:821px">186</div>
<div class="cell" style="left:299px;width:49px;text-align:center;top:821px">0771</div>
<div class="cell" style="left:351px;top:821px;letter-spacing:0.35px">Factura</div>
<div class="cell" style="left:400px;top:821px;letter-spacing:0.05px">Inicial 002200000001</div>
<div class="cell" style="left:605px;width:71px;text-align:center;top:821px">0277</div>
<div class="cell" style="left:676px;width:54px;text-align:right;top:821px">170,75</div>
<div class="cell" style="left:733px;width:45px;text-align:right;top:821px">35,86</div>
<div class="cb" style="left:865px;top:821px"></div>
<div class="cb" style="left:33px;top:841px"></div>
<div class="cb" style="left:865px;top:841px"></div>
<svg style="left:0;top:0" width="1218" height="859" viewBox="0 0 1218 859"><line x1="922" y1="289" x2="1113" y2="441" stroke="#0b7d7d" stroke-width="4.5" stroke-linecap="round"/></svg>
</body></html>
